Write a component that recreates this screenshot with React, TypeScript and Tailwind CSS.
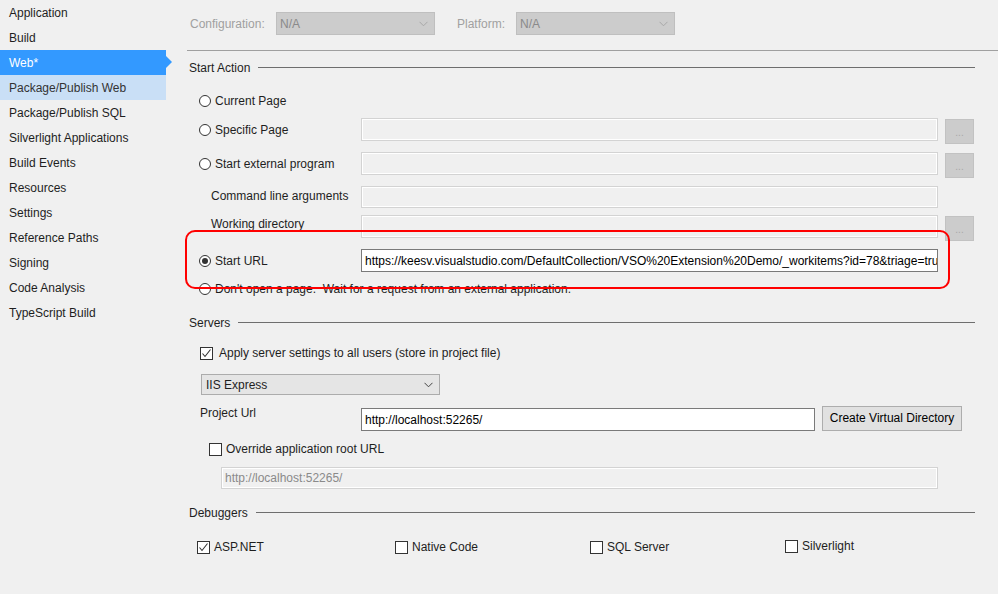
import React from "react";

const navItems = [
  "Application",
  "Build",
  "Web*",
  "Package/Publish Web",
  "Package/Publish SQL",
  "Silverlight Applications",
  "Build Events",
  "Resources",
  "Settings",
  "Reference Paths",
  "Signing",
  "Code Analysis",
  "TypeScript Build",
];

function Chevron({ color }: { color: string }) {
  return (
    <svg width="9" height="6" viewBox="0 0 9 6" className="shrink-0">
      <polyline points="0.5,0.8 4.5,4.8 8.5,0.8" fill="none" stroke={color} strokeWidth="1" />
    </svg>
  );
}

function Radio({ checked = false }: { checked?: boolean }) {
  return (
    <span className="w-[12px] h-[12px] rounded-full border border-[#333333] bg-white flex items-center justify-center shrink-0">
      {checked && <span className="w-[6px] h-[6px] rounded-full bg-[#333333]" />}
    </span>
  );
}

function Check({ checked = false }: { checked?: boolean }) {
  return (
    <span className="w-[13px] h-[13px] border border-[#333333] bg-white flex items-center justify-center shrink-0">
      {checked && (
        <svg width="11" height="11" viewBox="0 0 11 11">
          <polyline points="1.5,5.5 4,8.5 9.5,1.5" fill="none" stroke="#333333" strokeWidth="1.1" />
        </svg>
      )}
    </span>
  );
}

function DisabledBox({ w, h = 23, text }: { w: number; h?: number; text?: string }) {
  return (
    <div
      className="border border-[#d3d3d3] shadow-[inset_0_0_0_1px_#ffffff] bg-[#f0f0f0] flex items-center pl-[3px] text-[#8a8a8a] shrink-0"
      style={{ width: w, height: h }}
    >
      {text}
    </div>
  );
}

function DotsButton() {
  return (
    <div className="ml-[7px] w-[29px] h-[25px] self-start mt-[2px] bg-[#cccccc] border border-[#c2c2c2] flex items-end justify-center pb-[5px] text-[#a8a8a8] text-[10px] leading-none shrink-0">
      ...
    </div>
  );
}

function SectionHeader({ title }: { title: string }) {
  return (
    <div className="flex items-center pl-[9px] pr-[23px] h-full">
      <span className="text-[#1e1e1e]">{title}</span>
      <div className="flex-1 h-px bg-[#6e6e6e] ml-[8px] -mt-[1px]" />
    </div>
  );
}

export default function App() {
  return (
    <div
      className="w-[998px] h-[594px] bg-[#f0f0f0] flex text-[12px] text-[#1e1e1e] overflow-hidden"
      style={{ fontFamily: '"Liberation Sans", Arial, sans-serif' }}
    >
      {/* Sidebar */}
      <div className="w-[180px] shrink-0 flex flex-col">
        {navItems.map((item) => {
          const selected = item === "Web*";
          const hover = item === "Package/Publish Web";
          return (
            <div
              key={item}
              className={
                "relative w-[166px] h-[25px] pl-[9px] flex items-center " +
                (selected ? "bg-[#3399ff] text-white" : hover ? "bg-[#c9dff6] text-[#333333]" : "text-[#1e1e1e]")
              }
            >
              {item}
              {selected && (
                <span className="absolute left-[166px] top-[6px] w-0 h-0 border-y-[6px] border-y-transparent border-l-[6px] border-l-[#3399ff]" />
              )}
            </div>
          );
        })}
      </div>

      {/* Content */}
      <div className="relative flex-1 flex flex-col">
        {/* Top config row */}
        <div className="h-[50px] flex items-start pt-[12px] pl-[10px]">
          <span className="w-[86px] h-[23px] flex items-center text-[#a0a0a0]">Configuration:</span>
          <div className="w-[159px] h-[23px] bg-[#cccccc] border border-[#bfbfbf] flex items-center pl-[3px] pr-[6px] text-[#8a8a8a]">
            <span className="flex-1">N/A</span>
            <Chevron color="#a8a8a8" />
          </div>
          <span className="ml-[22px] w-[59px] h-[23px] flex items-center text-[#a0a0a0]">Platform:</span>
          <div className="w-[159px] h-[23px] bg-[#cccccc] border border-[#bfbfbf] flex items-center pl-[3px] pr-[6px] text-[#8a8a8a]">
            <span className="flex-1">N/A</span>
            <Chevron color="#a8a8a8" />
          </div>
        </div>
        <div className="ml-[7px] h-px bg-[#a0a0a0]" />

        {/* Start Action */}
        <div className="h-[34px]">
          <SectionHeader title="Start Action" />
        </div>
        <div className="h-[32px] flex items-center pl-[19px] gap-[4px]">
          <Radio />
          <span>Current Page</span>
        </div>
        <div className="h-[25px] flex items-center pl-[19px]">
          <div className="w-[162px] flex items-center gap-[4px]">
            <Radio />
            <span>Specific Page</span>
          </div>
          <DisabledBox w={577} />
          <DotsButton />
        </div>
        <div className="mt-[9px] h-[25px] flex items-center pl-[19px]">
          <div className="w-[162px] flex items-center gap-[4px]">
            <Radio />
            <span>Start external program</span>
          </div>
          <DisabledBox w={577} />
          <DotsButton />
        </div>
        <div className="mt-[9px] h-[24px] flex items-center pl-[19px]">
          <div className="w-[162px] pl-[12px] -mt-[3px]">Command line arguments</div>
          <DisabledBox w={577} h={22} />
        </div>
        <div className="mt-[5px] h-[25px] flex items-center pl-[19px]">
          <div className="w-[162px] pl-[12px] -mt-[5px]">Working directory</div>
          <DisabledBox w={577} />
          <DotsButton />
        </div>
        <div className="mt-[9px] h-[25px] flex items-center pl-[19px]">
          <div className="w-[162px] flex items-center gap-[4px]">
            <Radio checked />
            <span>Start URL</span>
          </div>
          <div className="w-[577px] h-[23px] bg-white border border-[#7a7a7a] flex items-center pl-[3px] overflow-hidden whitespace-nowrap text-black">
            https://keesv.visualstudio.com/DefaultCollection/VSO%20Extension%20Demo/_workitems?id=78&amp;triage=tru
          </div>
        </div>
        <div className="h-[32px] flex items-center pl-[19px] gap-[4px]">
          <Radio />
          <span>Don't open a page.&nbsp; Wait for a request from an external application.</span>
        </div>

        {/* Servers */}
        <div className="h-[36px]">
          <SectionHeader title="Servers" />
        </div>
        <div className="h-[24px] flex items-center pl-[20px] gap-[6px]">
          <Check checked />
          <span>Apply server settings to all users (store in project file)</span>
        </div>
        <div className="mt-[9px] ml-[21px] w-[239px] h-[21px] bg-[#e5e5e5] border border-[#acacac] flex items-center pl-[4px] pr-[6px]">
          <span className="flex-1">IIS Express</span>
          <Chevron color="#444444" />
        </div>
        <div className="mt-[12px] h-[25px] flex items-center pl-[20px]">
          <div className="w-[161px] self-start -mt-[2px] leading-[16px]">Project Url</div>
          <div className="w-[454px] h-[23px] bg-white border border-[#7a7a7a] flex items-center pl-[3px] text-black">
            http://localhost:52265/
          </div>
          <div className="ml-[7px] w-[140px] h-[25px] -mt-[3px] bg-[#e1e1e1] border border-[#adadad] flex items-center justify-center text-black">
            Create Virtual Directory
          </div>
        </div>
        <div className="h-[34px] flex items-center pl-[29px] gap-[4px]">
          <Check />
          <span>Override application root URL</span>
        </div>
        <div className="h-[24px] flex items-center pl-[41px]">
          <DisabledBox w={717} h={22} text="http://localhost:52265/" />
        </div>

        {/* Debuggers */}
        <div className="h-[46px]">
          <SectionHeader title="Debuggers" />
        </div>
        <div className="h-[22px] flex items-center pl-[17px]">
          <div className="w-[198px] flex items-center gap-[4px]">
            <Check checked />
            <span>ASP.NET</span>
          </div>
          <div className="w-[195px] flex items-center gap-[4px]">
            <Check />
            <span>Native Code</span>
          </div>
          <div className="w-[195px] flex items-center gap-[4px]">
            <Check />
            <span>SQL Server</span>
          </div>
          <div className="w-[195px] flex items-center gap-[4px] -mt-[2px]">
            <Check />
            <span>Silverlight</span>
          </div>
        </div>

        {/* Red highlight overlay */}
        <div className="absolute left-[5px] top-[230px] w-[765px] h-[59px] border-2 border-[#ff0000] rounded-[10px] pointer-events-none" />
      </div>
    </div>
  );
}
